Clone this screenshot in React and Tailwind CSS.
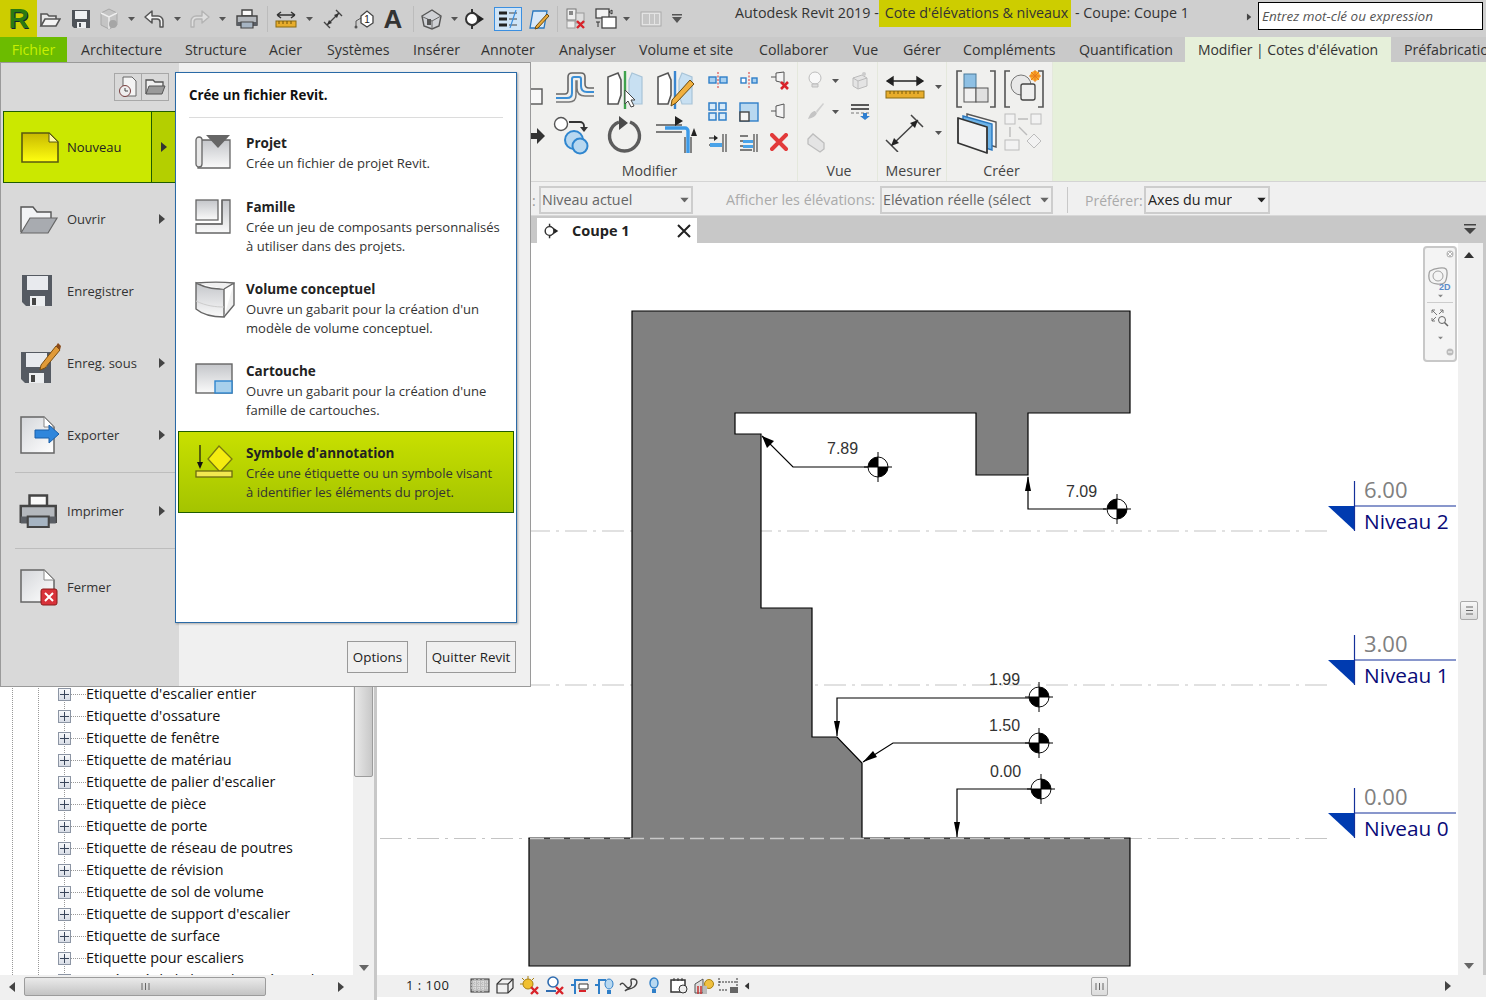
import React from "react";

// --- small drawing helpers ---
const Ico = ({ w = 22, h = 22, className = "", children }) => (
  <svg width={w} height={h} viewBox={`0 0 ${w} ${h}`} fill="none" className={`shrink-0 ${className}`}>
    {children}
  </svg>
);

const Caret = ({ className = "", c = "#555" }) => (
  <Ico w={7} h={4} className={className}><path d="M0 0h7L3.5 4z" fill={c} /></Ico>
);

const Arrow = ({ dir = "right", c = "#444", className = "" }) => {
  const d = { right: "M0 0l6 5-6 5z", left: "M6 0L0 5l6 5z", up: "M0 6l5-6 5 6z", down: "M0 0h10L5 6z" }[dir];
  const w = dir === "right" || dir === "left" ? 6 : 10;
  const h = dir === "right" || dir === "left" ? 10 : 6;
  return <Ico w={w} h={h} className={className}><path d={d} fill={c} /></Ico>;
};

const Sep = ({ className = "" }) => <div className={`h-[26px] w-px shrink-0 bg-[#bcbcbc] ${className}`} />;

function Defs() {
  return (
    <svg width="0" height="0" className="absolute">
      <defs>
        <linearGradient id="gYel" x1="0" y1="0" x2="0" y2="1"><stop offset="0" stopColor="#c8b800" /><stop offset="1" stopColor="#ffff10" /></linearGradient>
        <linearGradient id="gGray" x1="0" y1="0" x2="0" y2="1"><stop offset="0" stopColor="#c4c6ca" /><stop offset="1" stopColor="#fafafa" /></linearGradient>
        <linearGradient id="gDoc" x1="0" y1="0" x2="1" y2="1"><stop offset="0" stopColor="#d4d6da" /><stop offset="1" stopColor="#ffffff" /></linearGradient>
      </defs>
    </svg>
  );
}

// --- quick access toolbar icons ---
const OpenIco = ({ className }) => (
  <Ico className={className}>
    <path d="M2 18V6h6l2 2h7v3" stroke="#555" strokeWidth="1.6" fill="#e8e8e8" />
    <path d="M2 18l4-7h15l-4 7z" stroke="#555" strokeWidth="1.6" fill="#f4f4f4" />
  </Ico>
);
const SaveIco = ({ className }) => (
  <Ico w={20} className={className}>
    <path d="M1 2h18v18H3l-2-2z" fill="#4e5258" />
    <rect x="4" y="3" width="12" height="8" fill="#eef0f2" />
    <rect x="6" y="14" width="9" height="6" fill="#eef0f2" />
    <rect x="8" y="15" width="2" height="4" fill="#4e5258" />
  </Ico>
);
const CubeQat = ({ className }) => (
  <Ico className={className}>
    <path d="M11 1l8 4v12l-8 4-8-4V5z" fill="#c4c4c4" stroke="#a8a8a8" />
    <path d="M3 5l8 4 8-4M11 9v12" stroke="#eee" strokeWidth="1.4" />
    <circle cx="15" cy="16" r="4" fill="#a6a6a6" />
  </Ico>
);
const UndoIco = ({ className, c = "#555" }) => (
  <Ico className={className}>
    <path d="M9 3L2 9l7 6v-4h5a3 3 0 0 1 3 3v5h3v-6a5 5 0 0 0-5-5H9z" fill="#f3f3f3" stroke={c} strokeWidth="1.5" strokeLinejoin="round" />
  </Ico>
);
const RedoIco = ({ className }) => (
  <Ico className={className}>
    <path d="M13 3l7 6-7 6v-4H8a3 3 0 0 0-3 3v5H2v-6a5 5 0 0 1 5-5h6z" fill="#dedede" stroke="#b4b4b4" strokeWidth="1.4" strokeLinejoin="round" />
  </Ico>
);
const PrintIco = ({ className, s = 1 }) => (
  <Ico w={22 * s} h={22 * s} className={className}>
    <g transform={`scale(${s})`}>
      <path d="M6 2h10v6H6z" fill="#fafafa" stroke="#444" strokeWidth="1.4" />
      <path d="M1 8h20v9H1z" fill="#b4b8bd" stroke="#444" strokeWidth="1.4" />
      <path d="M1 14h20v4H1z" fill="#5a5e64" />
      <path d="M5 14h12v6H5z" fill="#a6b4c2" stroke="#444" strokeWidth="1.2" />
    </g>
  </Ico>
);
const MeasureIco = ({ className }) => (
  <Ico className={className}>
    <path d="M2 7h18M2 7l4-3M2 7l4 3M20 7l-4-3M20 7l-4 3" stroke="#333" strokeWidth="1.5" />
    <rect x="1" y="13" width="20" height="6" fill="#e8ad2c" stroke="#8a6a10" />
    <path d="M4 13v3M8 13v3M12 13v3M16 13v3" stroke="#6e5208" />
  </Ico>
);
const DimIco = ({ className }) => (
  <Ico className={className}>
    <path d="M5 17L17 5M2 14l6 6M14 2l6 6" stroke="#444" strokeWidth="1.4" />
    <path d="M5 17l2-5 3 3zM17 5l-2 5-3-3z" fill="#333" />
  </Ico>
);
const TagIco = ({ className }) => (
  <Ico className={className}>
    <path d="M3 19v-6l5-3" stroke="#555" />
    <path d="M8 8l6-5 6 5v7l-6 4-6-4z" fill="#fff" stroke="#444" strokeWidth="1.3" />
    <text x="14" y="15" textAnchor="middle" fontSize="10" fill="#222" fontFamily="'Liberation Sans',sans-serif">1</text>
    <circle cx="3" cy="19" r="1.5" fill="#555" />
  </Ico>
);
const HouseIco = ({ className }) => (
  <Ico className={className}>
    <path d="M11 2l9 6-2 10-7 3-8-3-2-10z" fill="#d0d2d6" stroke="#555" strokeWidth="1.4" />
    <path d="M2 9l9 4 9-5M11 13v8" stroke="#666" />
    <rect x="6" y="11" width="4" height="6" fill="#555" />
  </Ico>
);
const SectionIco = ({ className, s = 22 }) => (
  <Ico w={s} h={s} className={className}>
    <g transform={`scale(${s / 22})`}>
      <path d="M9 1v20" stroke="#333" strokeWidth="2" />
      <path d="M9 3l12 8-12 8z" fill="#222" />
      <circle cx="9" cy="11" r="6" fill="#fff" stroke="#333" strokeWidth="2" />
    </g>
  </Ico>
);
const ThinLines = ({ className }) => (
  <div className={`flex h-[24px] w-[28px] shrink-0 items-center justify-center border border-[#3b8fe0] bg-[#cfe4f7] ${className}`}>
    <Ico w={20} h={18}>
      <path d="M1 3h8M1 9h8M1 15h8" stroke="#222" strokeWidth="3" />
      <path d="M11 3h8M11 9h8M11 15h8" stroke="#444" />
      <path d="M12 18L18 0" stroke="#3b8fe0" strokeWidth="1.2" />
    </Ico>
  </div>
);
const PencilBox = ({ className }) => (
  <Ico className={className}>
    <path d="M5 3h14l-3 17H2z" fill="#d8e8f8" stroke="#2a78c0" strokeWidth="1.3" />
    <path d="M8 18L19 6l2 2-11 12-3 1z" fill="#e8a838" stroke="#6a4a10" />
  </Ico>
);
const CloseWins = ({ className }) => (
  <Ico className={className}>
    <rect x="2" y="1" width="9" height="11" fill="#eee" stroke="#777" />
    <rect x="4" y="3" width="4" height="4" fill="#888" />
    <rect x="11" y="5" width="8" height="10" fill="#ddd" stroke="#999" />
    <rect x="2" y="13" width="8" height="7" fill="#eee" stroke="#999" />
    <path d="M12 13l7 7m0-7l-7 7" stroke="#d8232a" strokeWidth="2.4" />
  </Ico>
);
const SwitchWins = ({ className }) => (
  <Ico className={className}>
    <rect x="1" y="1" width="13" height="9" fill="#f2f2f2" stroke="#444" strokeWidth="1.3" />
    <rect x="7" y="9" width="14" height="11" fill="#fff" stroke="#444" strokeWidth="1.3" />
    <path d="M17 2v4l-3-2zM3 14v5M1 14h4" stroke="#333" />
  </Ico>
);
const Barcode = ({ className }) => (
  <Ico className={className}>
    <rect x="1" y="4" width="20" height="14" fill="#e4e4e4" stroke="#aaa" />
    <path d="M4 6v10M6 6v10M8 6v10M11 6v10M13 6v10M16 6v10M18 6v10" stroke="#a8a8a8" />
  </Ico>
);

// --- ribbon icons ---
const OffsetIco = () => (
  <Ico w={44} h={40}>
    <path d="M4 24H13Q16 24 16 20V7Q16 3 20 3H29Q33 3 33 7V14Q33 18 37 18H42" stroke="#666" strokeWidth="1.6" />
    <path d="M4 28H15Q20 28 20 23V9Q20 7 22 7H27Q29 7 29 9V16Q29 22 35 22H42" stroke="#3b8fd6" strokeWidth="2" />
    <path d="M4 32H17Q24 32 24 25V11H25V18Q25 26 33 26H42" stroke="#777" strokeWidth="1.5" />
  </Ico>
);
const MirrorIco = ({ axis, children }) => (
  <Ico w={40} h={40}>
    <path d="M3 34V7l10-4 3 7v15l-3 9z" fill="#fff" stroke="#555" strokeWidth="1.6" />
    <path d="M37 34V7l-10-4-3 7v15l3 9z" fill="#c8e0f2" stroke="#a8c4d8" strokeWidth="1.2" />
    <path d="M20 1v38" stroke={axis} strokeWidth="2.4" />
    {children}
  </Ico>
);
const MoveIco = () => (
  <Ico w={40} h={40}>
    <circle cx="9" cy="9" r="6.5" fill="#fff" stroke="#555" strokeWidth="1.4" />
    <path d="M17 7h11a4 4 0 0 1 4 4v2" stroke="#333" strokeWidth="1.8" />
    <path d="M28 12h8l-4 5z" fill="#333" />
    <circle cx="22" cy="25" r="9" fill="#b8d8f0" stroke="#2f86cf" strokeWidth="2" />
    <circle cx="28" cy="31" r="7.5" fill="#b8d8f0" stroke="#2f86cf" strokeWidth="2" />
  </Ico>
);
const RotateIco = () => (
  <Ico w={40} h={40}>
    <path d="M14 7a15 15 0 1 0 11 0" stroke="#5c5c5c" strokeWidth="3.4" />
    <path d="M14 1l9 7-9 7z" fill="#4a4a4a" />
  </Ico>
);
const TrimIco = () => (
  <Ico w={42} h={40}>
    <path d="M1 10h26M1 17h26" stroke="#555" strokeWidth="1.4" />
    <path d="M10 13h20a3 3 0 0 1 3 3v22" stroke="#3b9ae8" strokeWidth="3.4" />
    <path d="M30 38V22M36 38V22" stroke="#555" strokeWidth="1.4" />
    <path d="M20 1l8 5-8 5zM39 13l-3 8h6z" fill="#222" />
  </Ico>
);
const SmallIcons = {
  alignH: (<><rect x="1" y="6" width="7" height="6" fill="#a8d0f0" stroke="#2f7fc8" strokeWidth="1.4" /><rect x="12" y="6" width="7" height="6" fill="#a8d0f0" stroke="#2f7fc8" strokeWidth="1.4" /><path d="M10 1v16" stroke="#d43030" strokeDasharray="2 1.5" /></>),
  alignS: (<><rect x="2" y="7" width="5" height="5" fill="#fff" stroke="#2f7fc8" strokeWidth="1.4" /><rect x="13" y="7" width="5" height="5" fill="#a8d0f0" stroke="#2f7fc8" strokeWidth="1.4" /><path d="M10 1v16" stroke="#d43030" strokeDasharray="2 1.5" /></>),
  grid: (<><rect x="1" y="1" width="7" height="7" fill="#d8ebf9" stroke="#2f7fc8" strokeWidth="1.5" /><rect x="11" y="1" width="7" height="7" fill="#d8ebf9" stroke="#2f7fc8" strokeWidth="1.5" /><rect x="1" y="11" width="7" height="7" fill="#d8ebf9" stroke="#2f7fc8" strokeWidth="1.5" /><rect x="11" y="11" width="7" height="7" fill="#d8ebf9" stroke="#2f7fc8" strokeWidth="1.5" /></>),
  scale: (<><rect x="1" y="1" width="18" height="18" fill="#b8d8f0" stroke="#2f7fc8" strokeWidth="1.4" /><rect x="1" y="10" width="9" height="9" fill="#f4f4f4" stroke="#444" strokeWidth="1.4" /></>),
  pinX: (<><path d="M1 6h5M6 2v8l8 2V1z" stroke="#555" fill="#f4f4f4" /><path d="M11 11l7 7m0-7l-7 7" stroke="#d8232a" strokeWidth="2.6" /></>),
  pin: (<path d="M1 9h5M6 4v10l8 2V2z" stroke="#555" fill="#f4f4f4" />),
  ext1: (<><path d="M1 5h8M1 12h8" stroke="#555" strokeWidth="1.3" /><path d="M6 2l4 3-4 3z" fill="#222" /><rect x="2" y="10" width="12" height="4" fill="#4aa3e8" /><path d="M15 1v18M18 1v18" stroke="#555" strokeWidth="1.3" /></>),
  ext2: (<><path d="M1 3h8M1 8h12M1 13h12M1 17h12" stroke="#555" strokeWidth="1.3" /><rect x="4" y="7" width="10" height="3" fill="#4aa3e8" /><rect x="4" y="12" width="10" height="3" fill="#4aa3e8" /><path d="M15 1v18M18 1v18" stroke="#555" strokeWidth="1.3" /></>),
  del: (<path d="M2 2l14 14M16 2L2 16" stroke="#e23a3a" strokeWidth="4" strokeLinecap="round" />),
  bulb: (<><circle cx="9" cy="7" r="6" fill="#f8f8f8" stroke="#bdbdbd" /><path d="M6 13h6v3H6z" fill="#ddd" stroke="#bdbdbd" /></>),
  cubeG: (<><path d="M3 7l9-3 5 3v8l-9 3-5-3z" fill="#e4e4e4" stroke="#bbb" /><path d="M3 7l5 3 9-3M8 10v8" stroke="#bbb" /><circle cx="14" cy="3" r="2" fill="#ccc" /></>),
  brush: (<><path d="M2 17c2-6 5-8 7-8l2 2c-1 3-4 5-9 6z" fill="#c4c4c4" /><path d="M10 9l7-8 1 1-7 9z" fill="#d0d0d0" /></>),
  lines: (<><path d="M1 3h18" stroke="#333" strokeWidth="1.6" /><path d="M1 7h18" stroke="#333" strokeWidth="1.6" /><path d="M1 11h18" stroke="#777" strokeDasharray="3 2" /><path d="M13 11h4v3h3l-5 4-5-4h3z" fill="#2f7fd0" /></>),
  eraser: (<path d="M2 6l5-5 11 9v6l-4 3L2 11z" fill="#e4e4e4" stroke="#bdbdbd" strokeWidth="1.3" />),
};
const Small = ({ name }) => (
  <div className="flex h-[31px] items-center justify-center">
    <Ico w={20} h={20}>{SmallIcons[name]}</Ico>
  </div>
);

const RulerBig = () => (
  <Ico w={40} h={24}>
    <path d="M2 6h36M2 6l6-4v8zM38 6l-6-4v8z" stroke="#222" strokeWidth="1.4" fill="#222" />
    <rect x="1" y="16" width="38" height="7" fill="#e8ad2c" stroke="#8a6a10" />
    <path d="M5 16v3M9 16v3M13 16v3M17 16v3M21 16v3M25 16v3M29 16v3M33 16v3" stroke="#7a5c0a" />
  </Ico>
);
const DimBig = () => (
  <Ico w={40} h={38}>
    <path d="M6 32L33 6M1 26l12 12M26 1l12 12" stroke="#444" strokeWidth="1.5" />
    <path d="M6 32l3-8 5 5zM33 6l-3 8-5-5z" fill="#222" />
  </Ico>
);
const Bracket = () => (
  <path d="M6 1H1v36h5M34 1h5v36h-5" stroke="#555" strokeWidth="1.6" />
);
const CompBig = () => (
  <Ico w={40} h={38}>
    <Bracket />
    <rect x="8" y="4" width="12" height="14" fill="#8ec0e4" stroke="#4a7a9a" />
    <rect x="8" y="18" width="12" height="14" fill="#f0f0f0" stroke="#555" />
    <rect x="20" y="18" width="12" height="14" fill="#e0e0e0" stroke="#555" />
  </Ico>
);
const CompNew = () => (
  <Ico w={40} h={38}>
    <Bracket />
    <circle cx="17" cy="15" r="10" fill="#e8e8e8" stroke="#777" />
    <rect x="17" y="14" width="14" height="16" rx="2" fill="#eee" stroke="#444" strokeWidth="1.3" />
    <circle cx="31" cy="6" r="5" fill="#f8a828" />
    <path d="M31 0v12M25 6h12M27 2l8 8M35 2l-8 8" stroke="#e87818" />
  </Ico>
);
const Sheets = () => (
  <Ico w={42} h={42}>
    <path d="M11 1l29 8v25L11 25z" fill="#f6f6f6" stroke="#555" strokeWidth="1.4" />
    <path d="M7 3l29 8v26L7 28z" fill="#6eb4e8" stroke="#2a78c0" strokeWidth="1.4" />
    <path d="M2 5l29 9v26L2 30z" fill="#f2f2f2" stroke="#333" strokeWidth="1.8" strokeLinejoin="round" />
  </Ico>
);
const Flow = () => (
  <Ico w={40} h={38}>
    <g stroke="#bcbcbc" fill="#f2f2f2">
      <rect x="1" y="1" width="10" height="10" />
      <rect x="27" y="1" width="10" height="10" />
      <rect x="1" y="27" width="14" height="10" />
      <path d="M30 21l7 7-7 7-7-7z" />
      <path d="M14 6h10M6 14v10M15 14l8 8" fill="none" strokeWidth="1.4" />
    </g>
  </Ico>
);

// --- application menu icons ---
const IcoNew = () => (
  <Ico w={40} h={34}>
    <path d="M2 3h27l9 9v20H2z" fill="url(#gYel)" stroke="#5a5a10" strokeWidth="1.6" />
    <path d="M29 3v9h9z" fill="#fff9a8" stroke="#5a5a10" />
  </Ico>
);
const IcoFolder = () => (
  <Ico w={40} h={34}>
    <path d="M2 30V5h12l4 5h14v6" fill="#f2f3f5" stroke="#555" strokeWidth="1.4" />
    <path d="M2 31l9-15h27l-9 15z" fill="#a8abb0" stroke="#666" strokeWidth="1.2" />
  </Ico>
);
const IcoSave = () => (
  <Ico w={36} h={34}>
    <path d="M3 1h30v31H7l-4-4z" fill="#555a62" />
    <rect x="8" y="2" width="21" height="14" fill="#e8eaee" />
    <rect x="11" y="22" width="15" height="10" fill="#eceef0" />
    <rect x="13" y="24" width="4" height="7" fill="#444" />
  </Ico>
);
const IcoSaveAs = () => (
  <Ico w={42} h={42}>
    <path d="M2 10h30v31H6l-4-4z" fill="#555a62" />
    <rect x="7" y="11" width="21" height="14" fill="#e8eaee" />
    <rect x="10" y="31" width="15" height="10" fill="#eceef0" />
    <rect x="12" y="33" width="4" height="7" fill="#444" />
    <path d="M22 23L37 4l4 4-15 18-5 2z" fill="#e09a38" stroke="#7a4e10" />
    <path d="M37 4l2-3 3 3-1 4z" fill="#8a4a1a" />
  </Ico>
);
const IcoExport = () => (
  <Ico w={40} h={40}>
    <path d="M2 2h23l10 10v26H2z" fill="url(#gDoc)" stroke="#666" strokeWidth="1.5" />
    <path d="M25 2v10h10z" fill="#fff" stroke="#888" />
    <path d="M16 15h14v-5l10 9-10 9v-5H16z" fill="#2f86dc" stroke="#1a5fa8" />
  </Ico>
);
const IcoClose = () => (
  <Ico w={40} h={38}>
    <path d="M2 2h23l10 10v22H2z" fill="url(#gDoc)" stroke="#666" strokeWidth="1.5" />
    <path d="M25 2v10h10z" fill="#fff" stroke="#888" />
    <rect x="22" y="21" width="16" height="16" rx="2" fill="#d8323a" stroke="#8a1a1a" />
    <path d="M26 25l8 8m0-8l-8 8" stroke="#fff" strokeWidth="2" />
  </Ico>
);

// --- "new file" list icons ---
const IcoProjet = () => (
  <Ico w={38} h={34}>
    <path d="M3 5h32v28H3z" fill="url(#gGray)" stroke="#666" strokeWidth="1.3" />
    <path d="M1 5a3 3 0 0 1 6 0v24a3 3 0 0 1-6 0z" fill="#e8e8e8" stroke="#666" strokeWidth="1.3" />
    <path d="M11 0h24l-12 13z" fill="#666" />
  </Ico>
);
const IcoFamille = () => (
  <Ico w={36} h={36}>
    <path d="M27 1h8v33H1v-9h26z" fill="url(#gGray)" stroke="#666" strokeWidth="1.3" />
    <rect x="1" y="1" width="22" height="20" fill="url(#gGray)" stroke="#666" strokeWidth="1.3" />
    <path d="M1 25h26V1" stroke="#666" strokeWidth="1.2" />
  </Ico>
);
const IcoVolume = () => (
  <Ico w={40} h={38}>
    <path d="M1 2c12 6 20 6 28 6v28C20 36 8 34 1 28z" fill="url(#gGray)" stroke="#666" strokeWidth="1.4" />
    <path d="M1 2c12-1 28-1 38 0L29 8M39 2v22L29 36" stroke="#666" strokeWidth="1.4" fill="#f0f0f0" />
    <path d="M1 20c10 5 20 6 28 6" stroke="#ccc" />
  </Ico>
);
const IcoCartouche = () => (
  <Ico w={38} h={32}>
    <rect x="1" y="1" width="36" height="29" fill="url(#gGray)" stroke="#666" strokeWidth="1.4" />
    <rect x="20" y="18" width="17" height="12" fill="#a8d0ec" stroke="#2f86cf" strokeWidth="1.4" />
  </Ico>
);
const IcoSymbole = () => (
  <Ico w={38} h={34}>
    <path d="M5 0v20" stroke="#111" strokeWidth="1.2" />
    <path d="M5 24l-3-7h6z" fill="#111" />
    <path d="M24 2l13 13-12 13-12-13z" fill="#f4ec10" stroke="#787810" strokeWidth="1.3" transform="translate(0,-1)" />
    <rect x="1" y="26" width="36" height="6" fill="#f2e850" stroke="#6a6a10" strokeWidth="1.3" />
  </Ico>
);

// --- status bar icons ---
const StatusIcons = [
  (<><rect x="1" y="3" width="18" height="13" fill="#bbb" stroke="#333" /><path d="M1 6h18M1 9h18M1 12h18M5 3v13M9 3v13M13 3v13" stroke="#eee" strokeDasharray="1 1" /></>),
  (<><path d="M2 8l5-5h11v9l-5 5H2z" fill="#f0f0f0" stroke="#333" strokeWidth="1.2" /><path d="M2 8h11v9M13 8l5-5" stroke="#333" strokeWidth="1.2" /></>),
  (<><circle cx="8" cy="8" r="5" fill="#f0c030" stroke="#a88010" /><path d="M8 0v3M0 8h3M2 2l2 2M14 2l-2 2" stroke="#a88010" /><path d="M11 11l7 7m0-7l-7 7" stroke="#d8232a" strokeWidth="2.4" /></>),
  (<><circle cx="8" cy="6" r="5" fill="#fff" stroke="#2f6cb0" strokeWidth="1.6" /><path d="M1 15h10" stroke="#2f6cb0" strokeWidth="2" /><path d="M11 11l7 7m0-7l-7 7" stroke="#d8232a" strokeWidth="2.4" /></>),
  (<><path d="M1 9h4V4h13M5 9v9" stroke="#2f7fc8" strokeWidth="2" /><path d="M9 8h9v5H9z" fill="#fff" stroke="#333" /><path d="M9 15h7" stroke="#d8232a" strokeWidth="2" /></>),
  (<><path d="M1 9h4V4h7M5 9v9" stroke="#2f7fc8" strokeWidth="2" /><ellipse cx="15" cy="8" rx="4" ry="5" fill="#b8d8f0" stroke="#2f7fc8" /><path d="M13 14h4v4h-4z" fill="#2f7fc8" /></>),
  (<path d="M1 9c4-6 6 6 10 2s-2-8 3-8 5 5 1 8-7 1-9 4" stroke="#444" strokeWidth="1.4" />),
  (<><ellipse cx="10" cy="7" rx="4" ry="5" fill="#b8d8f0" stroke="#2f7fc8" strokeWidth="1.4" /><path d="M8 13h4v4H8z" fill="#2f7fc8" /></>),
  (<><rect x="2" y="4" width="14" height="12" fill="#fff" stroke="#333" strokeWidth="1.5" /><path d="M5 2v3M9 2v3M13 2v3" stroke="#333" /><circle cx="14" cy="13" r="4" fill="#eee" stroke="#333" /></>),
  (<><path d="M1 8l8-5v14H1z" fill="#ddd" stroke="#555" /><path d="M4 10v8M7 10v8" stroke="#c83030" strokeWidth="1.5" /><circle cx="15" cy="8" r="4.5" fill="#f0c040" stroke="#a88010" /><path d="M9 10h4v8H9z" fill="#bbb" /></>),
  (<><path d="M1 2v8M19 2v8M1 6h18" stroke="#333" strokeDasharray="2 1" /><rect x="12" y="11" width="8" height="6" fill="#666" /><path d="M1 14h9" stroke="#333" strokeDasharray="2 1" /></>),
];

// --- ribbon data ---
const tabs = [
  { label: "Architecture", w: "w-[104px]" },
  { label: "Structure", w: "w-[84px]" },
  { label: "Acier", w: "w-[58px]" },
  { label: "Systèmes", w: "w-[86px]" },
  { label: "Insérer", w: "w-[68px]" },
  { label: "Annoter", w: "w-[78px]" },
  { label: "Analyser", w: "w-[80px]" },
  { label: "Volume et site", w: "w-[120px]" },
  { label: "Collaborer", w: "w-[94px]" },
  { label: "Vue", w: "w-[50px]" },
  { label: "Gérer", w: "w-[60px]" },
  { label: "Compléments", w: "w-[116px]" },
  { label: "Quantification", w: "w-[118px]" },
];

const Combo = ({ children, className = "", dark }) => (
  <div className={`flex h-[28px] shrink-0 items-center justify-between border-2 border-[#cdcdcd] pr-[3px] pl-[1px] text-[14.3px] leading-[20px] ${dark ? "text-[#222]" : "text-[#666]"} ${className}`}>
    <span className="overflow-hidden whitespace-nowrap">{children}</span>
    <Caret className="ml-1 scale-125" c={dark ? "#222" : "#666"} />
  </div>
);

function Panel({ label, className, labelClass = "", children }) {
  return (
    <div className={`flex h-full shrink-0 flex-col border-r border-[#e4e8dc] ${className}`}>
      <div className="h-[99px] overflow-hidden">{children}</div>
      <div className={`text-center text-[14.2px] leading-[20px] text-[#444] ${labelClass}`}>{label}</div>
    </div>
  );
}

function TopBar() {
  return (
    <div className="flex h-[37px] items-center bg-[#cfcfcf]">
      <div className="flex h-[37px] w-[37px] shrink-0 items-center justify-center bg-[#cdcd00] font-['Liberation_Sans',sans-serif] text-[28px] font-bold text-[#2a7a10] [text-shadow:1px_1px_0_#123]">R</div>
      <OpenIco className="ml-[2px]" />
      <SaveIco className="ml-[10px]" />
      <CubeQat className="ml-[7px]" />
      <Caret className="ml-[8px]" />
      <UndoIco className="ml-[8px]" />
      <Caret className="ml-[9px]" />
      <RedoIco className="ml-[8px]" />
      <Caret className="ml-[8px]" />
      <PrintIco className="ml-[10px]" />
      <Sep className="ml-[9px]" />
      <MeasureIco className="ml-[7px]" />
      <Caret className="ml-[9px]" />
      <DimIco className="ml-[9px]" />
      <TagIco className="ml-[9px]" />
      <div className="ml-[8px] w-[20px] shrink-0 text-center font-['Liberation_Sans',sans-serif] text-[26px] leading-none font-bold text-[#333]">A</div>
      <Sep className="ml-[10px]" />
      <HouseIco className="ml-[7px]" />
      <Caret className="ml-[8px]" />
      <SectionIco className="ml-[5px]" />
      <ThinLines className="ml-[9px]" />
      <PencilBox className="ml-[6px]" />
      <Sep className="ml-[7px]" />
      <CloseWins className="ml-[7px]" />
      <SwitchWins className="ml-[8px]" />
      <Caret className="ml-[6px]" />
      <Barcode className="ml-[10px]" />
      <Ico w={10} h={9} className="ml-[10px]"><path d="M0 0h10v1.5H0zM0 3h10L5 9z" fill="#555" /></Ico>
      <div className="ml-[53px] flex h-full items-start text-[14.3px] whitespace-pre text-[#333]">
        <span className="leading-[25px]">Autodesk Revit 2019 -</span>
        <span className="h-[27px] bg-[#cdcd00] pr-[3px] pl-[6px] leading-[25px]">Cote d'élévations &amp; niveaux</span>
        <span className="leading-[25px]"> - Coupe: Coupe 1</span>
      </div>
      <Arrow className="absolute left-[1246px] top-[12px] scale-75" />
      <div className="absolute left-[1258px] top-[2px] flex h-[28px] w-[225px] items-center border border-black bg-white pl-[3px] text-[13.5px] text-[#555] italic">
        Entrez mot-clé ou expression
      </div>
    </div>
  );
}

function TabBar() {
  return (
    <div className="flex h-[25px] items-center bg-[#c9c9c9] text-[14.2px] text-[#333]">
      <div className="mr-[2px] flex h-full w-[67px] shrink-0 items-center justify-center bg-[#6cbc00] text-[#c8f000]">Fichier</div>
      <div className="w-[12px] shrink-0" />
      {tabs.map((t) => (
        <div key={t.label} className={`shrink-0 whitespace-nowrap ${t.w}`}>{t.label}</div>
      ))}
      <div className="-ml-[12px] flex h-full w-[206px] shrink-0 items-center justify-center bg-[#e6f0da] text-[14px] tracking-[-0.05px] whitespace-nowrap">Modifier | Cotes d'élévation</div>
      <div className="ml-[13px] whitespace-nowrap">Préfabrication</div>
    </div>
  );
}

function Ribbon() {
  return (
    <div className="flex h-[120px] border-b border-[#d4d4d4] bg-[#f0f0ee]">
      <div className="w-[530px] shrink-0" />
      <Panel label="Modifier" labelClass="pr-[28px]" className="w-[268px]">
        <div className="flex">
          <div className="flex w-[22px] shrink-0 flex-col gap-[22px] overflow-hidden pt-[26px]">
            <Ico w={14} h={18}><rect x="-6" y="1" width="18" height="15" fill="#f8f8f8" stroke="#555" strokeWidth="1.4" /></Ico>
            <Ico w={16} h={16}><path d="M0 5h7V0l8 8-8 8v-5H0z" fill="#333" /></Ico>
          </div>
          <div className="flex w-[50px] shrink-0 flex-col gap-[5px] pt-[8px]"><OffsetIco /><MoveIco /></div>
          <div className="flex w-[53px] shrink-0 flex-col gap-[5px] pt-[8px] pl-[3px]">
            <MirrorIco axis="#3fa34d"><path d="M20 20v14l3-3 3 6 3-1-3-6h4z" fill="#fff" stroke="#444" /></MirrorIco>
            <RotateIco />
          </div>
          <div className="flex w-[45px] shrink-0 flex-col gap-[5px] pt-[8px]">
            <MirrorIco axis="#3a86d0"><path d="M16 36l1-6 18-20 4 4-18 19z" fill="#f0b040" stroke="#6a4a10" /></MirrorIco>
            <TrimIco />
          </div>
          <div className="grid w-[96px] grid-cols-3 pt-[3px] pl-[2px]">
            <Small name="alignH" /><Small name="alignS" /><Small name="pinX" />
            <Small name="grid" /><Small name="scale" /><Small name="pin" />
            <Small name="ext1" /><Small name="ext2" /><Small name="del" />
          </div>
        </div>
      </Panel>
      <Panel label="Vue" labelClass="pl-[3px]" className="w-[80px]">
        <div className="ml-[2px] grid grid-cols-[32px_8px_40px] items-center pt-[3px]">
          <Small name="bulb" /><Caret /><Small name="cubeG" />
          <Small name="brush" /><Caret /><Small name="lines" />
          <Small name="eraser" />
        </div>
      </Panel>
      <Panel label="Mesurer" labelClass="pl-[3px]" className="w-[69px]">
        <div className="flex flex-col gap-[15px] pt-[13px] pl-[7px]">
          <div className="flex items-center"><RulerBig /><Caret className="ml-[10px]" /></div>
          <div className="flex items-center"><DimBig /><Caret className="ml-[10px]" /></div>
        </div>
      </Panel>
      <Panel label="Créer" labelClass="pl-[4px]" className="w-[106px]">
        <div className="grid grid-cols-[48px_40px] gap-y-[5px] pt-[8px] pl-[9px]">
          <CompBig /><CompNew /><Sheets /><Flow />
        </div>
      </Panel>
      <div className="flex-1 bg-[#e6f0da]" />
    </div>
  );
}

function OptionsBar() {
  return (
    <div className="flex h-[34px] items-center border-b border-[#d8d8d8] bg-[#f0f0f0] pt-[3px]">
      <div className="w-[532px] shrink-0" />
      <span className="w-[7px] shrink-0 text-[14px] text-[#999]">:</span>
      <Combo className="w-[154px]">Niveau actuel</Combo>
      <span className="ml-[33px] w-[154px] shrink-0 text-[14.3px] whitespace-nowrap text-[#aaa]">Afficher les élévations:</span>
      <Combo className="w-[173px]">Elévation réelle (sélect</Combo>
      <div className="ml-[14px] h-[26px] w-px shrink-0 bg-[#c8c8c8]" />
      <span className="ml-[17px] w-[58px] shrink-0 text-[14px] whitespace-nowrap text-[#aaa]">Préférer:</span>
      <Combo dark className="ml-[1px] w-[126px] pl-[2px]">Axes du mur</Combo>
    </div>
  );
}

function ViewTabs() {
  return (
    <div className="flex h-[27px] items-end bg-[#c8c8c8]">
      <div className="ml-[537px] flex h-[25px] w-[160px] items-center bg-white pl-[6px]">
        <SectionIco s={16} />
        <span className="ml-[13px] w-[105px] text-[14.5px] font-bold text-[#222]">Coupe 1</span>
        <Ico w={14} h={14}><path d="M1 1l12 12M13 1L1 13" stroke="#222" strokeWidth="2" /></Ico>
      </div>
      <Ico w={12} h={10} className="mb-[9px] ml-[767px]"><path d="M0 0h12v1.5H0zM0 4h12l-6 6z" fill="#444" /></Ico>
    </div>
  );
}

const treeRows = [
  "Etiquette d'escalier entier", "Etiquette d'ossature", "Etiquette de fenêtre", "Etiquette de matériau",
  "Etiquette de palier d'escalier", "Etiquette de pièce", "Etiquette de porte", "Etiquette de réseau de poutres",
  "Etiquette de révision", "Etiquette de sol de volume", "Etiquette de support d'escalier", "Etiquette de surface",
  "Etiquette pour escaliers",
];

function TreeRow({ children }) {
  return (
    <div className="flex h-[22px] items-center">
      <div className="ml-[58px] flex h-[13px] w-[13px] shrink-0 items-center justify-center border border-[#8c95a4] bg-linear-to-b from-[#f8f9fb] to-[#d8dde6]">
        <Ico w={9} h={9}><path d="M0 4.5h9M4.5 0v9" stroke="#39455a" /></Ico>
      </div>
      <div className="w-[15px] shrink-0 border-t border-dotted border-[#999]" />
      <div className="w-[267px] shrink-0 overflow-hidden text-[14.35px] whitespace-pre text-[#111]">{children}</div>
    </div>
  );
}

function ProjectBrowser() {
  return (
    <div className="flex w-[377px] shrink-0 flex-col border-r-[3px] border-[#c8c8c8] bg-white">
      <div className="flex h-[732px]">
        <div className="relative h-full w-[353px] overflow-hidden pt-[440px]">
          <div className="absolute top-0 bottom-0 left-[12px] border-l border-dotted border-[#999]" />
          <div className="absolute top-0 bottom-0 left-[38px] border-l border-dotted border-[#999]" />
          <div className="absolute top-0 bottom-0 left-[64px] border-l border-dotted border-[#999]" />
          <div className="relative">
            {treeRows.map((r) => <TreeRow key={r}>{r}</TreeRow>)}
            <TreeRow>Extrémité de la ligne de repère : Plein</TreeRow>
          </div>
        </div>
        <div className="flex w-[21px] flex-col bg-[#f0f0f0]">
          <div className="mx-[1px] h-[534px] rounded-b-[2px] border border-[#9c9c9c] bg-linear-to-r from-[#e8e8e8] to-[#c8c8c8]" />
          <div className="flex-1" />
          <Arrow dir="down" c="#666" className="mb-[4px] self-center" />
        </div>
      </div>
      <div className="flex h-[25px] items-center bg-[#f0f0f0] pb-[2px]">
        <Arrow dir="left" c="#444" className="ml-[9px]" />
        <div className="ml-[9px] flex h-[19px] w-[242px] items-center justify-center rounded-[2px] border border-[#9c9c9c] bg-linear-to-b from-[#eaeaea] to-[#c4c4c4]">
          <Ico w={9} h={9}><path d="M1 1v7M4.5 1v7M8 1v7" stroke="#666" /></Ico>
        </div>
        <Arrow dir="right" c="#444" className="ml-[72px]" />
      </div>
    </div>
  );
}

function SpotMark({ x, y, alt }) {
  const q = alt
    ? `M${x} ${y}V${y - 10}A10 10 0 0 1 ${x + 10} ${y}ZM${x} ${y}V${y + 10}A10 10 0 0 1 ${x - 10} ${y}Z`
    : `M${x} ${y}H${x - 10}A10 10 0 0 1 ${x} ${y - 10}ZM${x} ${y}H${x + 10}A10 10 0 0 1 ${x} ${y + 10}Z`;
  return (
    <g>
      <circle cx={x} cy={y} r="10" fill="#fff" stroke="#111" strokeWidth="1" />
      <path d={q} fill="#000" />
      <path d={`M${x - 14} ${y}H${x + 14}M${x} ${y - 15}V${y + 15}`} stroke="#000" strokeWidth="1" />
    </g>
  );
}

function LevelMark({ y, value, name }) {
  return (
    <g>
      <path d={`M1328 ${y - 25}H1355V${y}Z`} fill="#003bb0" />
      <path d={`M1354.5 ${y}V${y - 50}M1354 ${y - 25}H1456`} stroke="#14309a" strokeWidth="1.2" />
      <text x="1364" y={y - 33} fontSize="22" fill="#808080" fontFamily="'Open Sans',sans-serif">{value}</text>
      <text x="1364" y={y - 2} fontSize="20.8" fill="#0a0a78" fontFamily="'Open Sans',sans-serif">{name}</text>
    </g>
  );
}

const spotText = { fontSize: 16, fill: "#333", fontFamily: "'Liberation Sans',sans-serif" };
const leader = { fill: "none", stroke: "#000", strokeWidth: 1.2 };

function Drawing() {
  return (
    <svg width="1081" height="732" viewBox="377 243 1081 732" className="shrink-0 bg-white">
      <path d="M380 531H1328M380 685H1328M380 838.5H1328" fill="none" stroke="#c4c4c4" strokeWidth="1.2" strokeDasharray="22 6 3 6" />
      <path
        d="M632 311H1130V413H1028V475H976V413H735V434H761V608H812V737H837L862 763V838H1130V966H529V838H632Z"
        fill="#808080"
        stroke="#000"
        strokeWidth="1.2"
      />
      <path d="M530 838.5H1130" fill="none" stroke="#c8c8c8" strokeWidth="1.6" strokeDasharray="14 6" />

      <path d="M762 436L793 467H868" {...leader} />
      <path d="M762 436l12 5-7 7z" fill="#000" />
      <SpotMark x={878} y={467} />
      <text x="827" y="454" {...spotText}>7.89</text>

      <path d="M1028 477V509H1106" {...leader} />
      <path d="M1028 476l3 15h-6z" fill="#000" />
      <SpotMark x={1117} y={509} />
      <text x="1066" y="497" {...spotText}>7.09</text>

      <path d="M837 736V698H1029" {...leader} />
      <path d="M837 736l-3-15h6z" fill="#000" />
      <SpotMark x={1039} y={697} alt />
      <text x="989" y="685" {...spotText}>1.99</text>

      <path d="M863 762L893 743H1029" {...leader} />
      <path d="M863 762l10-11 4 6z" fill="#000" />
      <SpotMark x={1039} y={743} alt />
      <text x="989" y="731" {...spotText}>1.50</text>

      <path d="M957 837V789H1031" {...leader} />
      <path d="M957 837l-3-15h6z" fill="#000" />
      <SpotMark x={1041} y={789} alt />
      <text x="990" y="777" {...spotText}>0.00</text>

      <LevelMark y={531} value="6.00" name="Niveau 2" />
      <LevelMark y={685} value="3.00" name="Niveau 1" />
      <LevelMark y={838} value="0.00" name="Niveau 0" />
    </svg>
  );
}

function NavBar() {
  return (
    <div className="absolute top-[3px] left-[1046px] flex h-[116px] w-[34px] flex-col items-center rounded-[4px] border-2 border-[#c8c8c8] bg-[#f4f4f4]">
      <Ico w={8} h={8} className="mt-[2px] ml-[20px]"><circle cx="4" cy="4" r="3.5" fill="#bbb" /><path d="M2 2l4 4m0-4L2 6" stroke="#fff" /></Ico>
      <Ico w={26} h={24} className="mt-[9px]">
        <path d="M3 4c5-3 14-4 16-2s1 12-2 14-12 1-14-2-1-9 0-10z" stroke="#a0a0a0" strokeWidth="1.3" />
        <circle cx="11" cy="9" r="5" stroke="#a0a0a0" />
        <text x="12" y="23" fontSize="9" fontWeight="700" fill="#5a8ac8" fontFamily="'Liberation Sans',sans-serif">2D</text>
      </Ico>
      <Caret className="mt-[3px] scale-75" c="#888" />
      <div className="mt-[4px] h-px w-[26px] bg-[#ccc]" />
      <Ico w={18} h={18} className="mt-[6px]">
        <path d="M1 1l5 5M1 1v3M1 1h3M12 1L8 5M12 1v3M12 1H9M1 12l4-4M1 12V9M1 12h3" stroke="#777" />
        <circle cx="11" cy="11" r="3.5" stroke="#666" /><path d="M13.5 13.5L17 17" stroke="#666" strokeWidth="1.5" />
      </Ico>
      <Caret className="mt-[9px] scale-75" c="#888" />
      <Ico w={8} h={8} className="mt-[8px] ml-[20px]"><circle cx="4" cy="4" r="3.5" fill="#bbb" /><path d="M2 4h4" stroke="#fff" /></Ico>
    </div>
  );
}

function StatusBar() {
  return (
    <div className="flex h-[25px] items-start bg-white">
      <div className="flex h-[22px] flex-1 items-center bg-[#f0f0f0] text-[13px] text-[#222]">
        <span className="ml-[29px] w-[62px] shrink-0 tracking-[0.5px]">1 : 100</span>
        {StatusIcons.map((ic, i) => (
          <div key={i} className="flex w-[24.8px] shrink-0 justify-center"><Ico w={20} h={20}>{ic}</Ico></div>
        ))}
        <Arrow dir="left" c="#333" className="ml-[3px] scale-75" />
        <div className="ml-[341px] flex h-[19px] w-[17px] shrink-0 items-center justify-center rounded-[2px] border border-[#aaa] bg-linear-to-b from-[#f2f2f2] to-[#dcdcdc]">
          <Ico w={9} h={9}><path d="M1 1v7M4.5 1v7M8 1v7" stroke="#666" /></Ico>
        </div>
        <Arrow dir="right" c="#444" className="ml-[337px]" />
      </div>
      <div className="h-[22px] w-[36px] bg-[#f0f0f0]" />
    </div>
  );
}

const menuItems = [
  { label: "Ouvrir", icon: <IcoFolder />, arrow: true },
  { label: "Enregistrer", icon: <IcoSave /> },
  { label: "Enreg. sous", icon: <IcoSaveAs />, arrow: true },
  { label: "Exporter", icon: <IcoExport />, arrow: true, h: "h-[74px] pb-[2px]", sep: true },
  { label: "Imprimer", icon: <PrintIco s={1.75} />, arrow: true, h: "h-[76px]", sep: true },
  { label: "Fermer", icon: <IcoClose />, h: "h-[76px]" },
];

const newItems = [
  { title: "Projet", icon: <IcoProjet />, desc: ["Crée un fichier de projet Revit."], h: "h-[64px]" },
  { title: "Famille", icon: <IcoFamille />, desc: ["Crée un jeu de composants personnalisés", "à utiliser dans des projets."] },
  { title: "Volume conceptuel", icon: <IcoVolume />, desc: ["Ouvre un gabarit pour la création d'un", "modèle de volume conceptuel."] },
  { title: "Cartouche", icon: <IcoCartouche />, desc: ["Ouvre un gabarit pour la création d'une", "famille de cartouches."] },
  { title: "Symbole d'annotation", icon: <IcoSymbole />, desc: ["Crée une étiquette ou un symbole visant", "à identifier les éléments du projet."], active: true },
];

function FileMenu() {
  return (
    <div className="absolute top-[62px] left-0 flex h-[625px] w-[531px] border border-[#9a9a9a] bg-[#f0f0f0]">
      <div className="h-full w-[178px] shrink-0 bg-[#d9d9d9] pl-[2px]">
        <div className="flex h-[48px] justify-start pt-[10px] pl-[111px]">
          <div className="flex h-[28px] w-[28px] items-center justify-center border border-[#a8a8a8]">
            <Ico w={20} h={22}><path d="M5 1h9l4 4v15H5z" fill="#f4f4f4" stroke="#666" /><circle cx="7" cy="15" r="5.5" fill="#eee" stroke="#7a4040" /><path d="M7 12v3h3" stroke="#444" /></Ico>
          </div>
          <div className="flex h-[28px] w-[27px] items-center justify-center border border-l-0 border-[#a8a8a8]">
            <Ico w={22} h={20}><path d="M2 17V3h7l2 2h8v4" fill="#f0f0f0" stroke="#555" strokeWidth="1.3" /><path d="M2 17l3-8h16l-3 8z" fill="#9a9a9a" stroke="#555" /></Ico>
          </div>
        </div>
        <div className="flex h-[72px] w-[173px] items-center border border-[#1f5c00] bg-[#cbe800] text-[13px] text-[#222]">
          <div className="w-[63px] shrink-0 pl-[16px]"><IcoNew /></div>
          <span className="flex-1 pt-[2px]">Nouveau</span>
          <div className="flex h-full w-[24px] shrink-0 items-center justify-center border-l border-[#1f5c00] bg-[#b4cf00]">
            <Arrow c="#333" />
          </div>
        </div>
        {menuItems.map((m) => (
          <div
            key={m.label}
            className={`flex w-[173px] items-center text-[13px] text-[#333] ${m.h || "h-[72px]"} ${m.sep ? "relative after:absolute after:right-0 after:bottom-0 after:left-[12px] after:h-px after:bg-[#bdbdbd]" : ""}`}
          >
            <div className="flex w-[64px] shrink-0 pl-[16px]">{m.icon}</div>
            <span className="flex-1 pt-[2px]">{m.label}</span>
            {m.arrow && <Arrow c="#444" className="mr-[11px]" />}
          </div>
        ))}
      </div>

      <div className="relative -ml-[4px] flex flex-1 flex-col">
        <div className="mt-[9px] h-[551px] w-[342px] border border-[#2a6aa6] bg-white shadow-[1px_1px_2px_rgba(0,0,0,0.3)]">
          <div className="mx-[13px] flex h-[45px] items-center border-b border-[#dcdcdc] pt-[1px] text-[13.3px] font-bold text-[#111]">Crée un fichier Revit.</div>
          {/* first row sits 3px under the rule */}
          <div className="pt-[3px]">
            {newItems.map((it) => (
              <div
                key={it.title}
                className={`mx-[2px] flex border ${it.h || "h-[82px]"} ${it.active ? "border-[#1f5c00] bg-linear-to-b from-[#c8e000] to-[#a4c400]" : "border-transparent"}`}
              >
                <div className="w-[67px] shrink-0 pt-[13px] pl-[16px]">{it.icon}</div>
                <div className="pt-[11px] text-[13.05px] text-[#333]">
                  <div className="text-[13.5px] leading-[21px] font-bold text-[#222]">{it.title}</div>
                  {it.desc.map((d) => <div key={d} className="leading-[19px] whitespace-nowrap">{d}</div>)}
                </div>
              </div>
            ))}
          </div>
        </div>
        <div className="flex justify-end gap-[18px] pt-[18px] pr-[14px] text-[13.4px] text-[#222]">
          <div className="flex h-[32px] w-[61px] items-center justify-center border border-[#999]">Options</div>
          <div className="flex h-[32px] w-[90px] items-center justify-center border border-[#999]">Quitter Revit</div>
        </div>
      </div>
    </div>
  );
}

export default function App() {
  return (
    <div className="relative h-[1000px] w-[1486px] overflow-hidden bg-[#c8c8c8] font-['Open_Sans',sans-serif]">
      <Defs />
      <TopBar />
      <TabBar />
      <Ribbon />
      <OptionsBar />
      <ViewTabs />
      <div className="flex h-[757px]">
        <ProjectBrowser />
        <div className="relative flex-1">
          <div className="flex h-[732px]">
            <Drawing />
            <div className="flex w-[25px] flex-col items-center bg-[#f0f0f0] pr-[3px]">
              <Arrow dir="up" c="#333" className="mt-[9px]" />
              <div className="mt-[343px] flex h-[19px] w-[18px] items-center justify-center rounded-[2px] border border-[#aaa] bg-linear-to-b from-[#f8f8f8] to-[#dcdcdc]">
                <Ico w={9} h={9}><path d="M1 1h7M1 4.5h7M1 8h7" stroke="#666" /></Ico>
              </div>
              <div className="flex-1" />
              <Arrow dir="down" c="#666" className="mb-[6px]" />
            </div>
          </div>
          <StatusBar />
          <NavBar />
        </div>
      </div>
      <FileMenu />
    </div>
  );
}
